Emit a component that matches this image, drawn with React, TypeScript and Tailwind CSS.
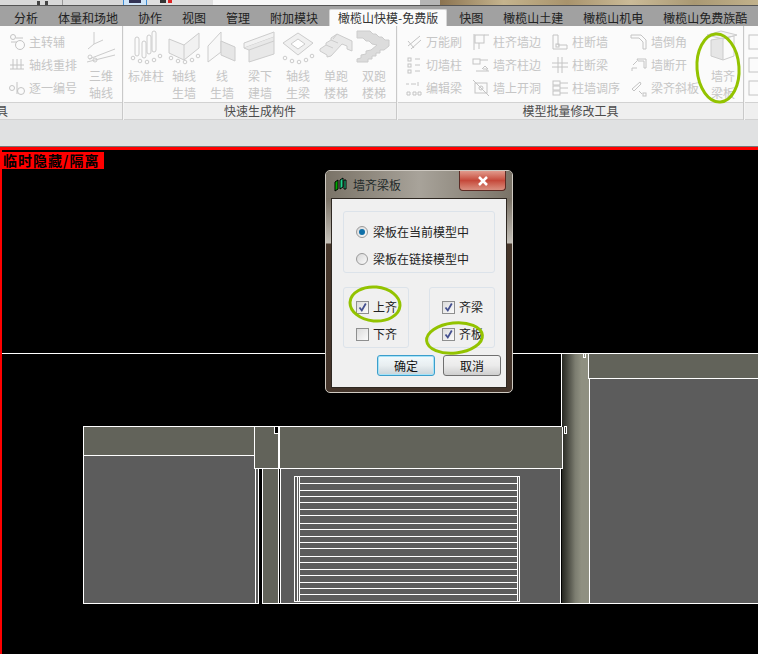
import React from 'react';

const cjk = { fontFamily: '"Noto Sans CJK SC", "Noto Sans", sans-serif' };

const tabs = ['分析', '体量和场地', '协作', '视图', '管理', '附加模块', '橄榄山快模-免费版', '快图', '橄榄山土建', '橄榄山机电', '橄榄山免费族酷'];

function Ic({ children }: { children: React.ReactNode }) {
    return (
        <svg width="18" height="18" viewBox="0 0 18 18" fill="none" stroke="#c4c4c4" strokeWidth="1" className="shrink-0">
            {children}
        </svg>
    );
}

function Big({ children }: { children: React.ReactNode }) {
    return (
        <svg width="36" height="36" viewBox="0 0 36 36" fill="none" stroke="#cccccc" strokeWidth="1" className="shrink-0">
            {children}
        </svg>
    );
}

function SmallTool({ icon, label }: { icon: React.ReactNode; label: string }) {
    return (
        <div className="flex h-[23px] items-center gap-[3px] whitespace-nowrap text-[12px] leading-none text-[#c6c6c6]">
            {icon}
            <span>{label}</span>
        </div>
    );
}

function BigTool({ icon, lines, w = 'w-[38px]' }: { icon: React.ReactNode; lines: string[]; w?: string }) {
    return (
        <div className={`flex ${w} flex-col items-center text-[12px] leading-[17px] text-[#c6c6c6]`}>
            <div className="flex h-[41px] items-center justify-center">{icon}</div>
            {lines.map((l) => (
                <span key={l} className="whitespace-nowrap">{l}</span>
            ))}
        </div>
    );
}

const dots = (
    <>
        <circle cx="5" cy="29" r="1.8" />
        <circle cx="12" cy="32" r="1.8" />
        <circle cx="19" cy="33" r="1.8" />
        <circle cx="26" cy="31" r="1.8" />
        <circle cx="32" cy="27" r="1.8" />
    </>
);

function Panel({ label, className, labelClass = 'justify-center', children }: { label: string; className: string; labelClass?: string; children: React.ReactNode }) {
    return (
        <div className={`flex h-[94px] shrink-0 flex-col border-r border-[#c9c9c9] ${className}`}>
            <div className="flex h-[76px] min-h-0 bg-[#fbfbfb]">{children}</div>
            <div className={`flex h-[18px] items-center overflow-hidden border-y border-[#d2d2d2] bg-[#efefef] text-[12px] leading-none text-[#4c4c4c] ${labelClass}`}>
                {label}
            </div>
        </div>
    );
}

function Ribbon() {
    return (
        <div className="flex h-[94px] gap-[1px] bg-[#f4f4f4]">
            <Panel label="具" labelClass="justify-start -ml-[4px]" className="w-[123px]">
                <div className="flex w-[83px] flex-col pt-[4px] pl-[8px]">
                    <SmallTool label="主转辅" icon={<Ic><circle cx="5" cy="4" r="2.5" /><circle cx="12" cy="12" r="4.5" /><path d="M8 5h7M3 9h6" /></Ic>} />
                    <SmallTool label="轴线重排" icon={<Ic><path d="M2 9h14M2 13h14M5 3v10M9 3v10M13 3v10" /></Ic>} />
                    <SmallTool label="逐一编号" icon={<Ic><circle cx="4" cy="9" r="2.5" /><circle cx="13" cy="12" r="3.5" /><path d="M9 3v12" /></Ic>} />
                </div>
                <BigTool
                    w="w-[36px]"
                    lines={['三维', '轴线']}
                    icon={<Big><path d="M11 3v12l9-4M11 15l-6 5" /><path d="M6 30l26-10M4 33l28-7" /><circle cx="7" cy="28" r="2" /><circle cx="12" cy="31" r="2" /></Big>}
                />
            </Panel>
            <Panel label="快速生成构件" className="w-[273px]">
                <div className="flex pl-[3px]">
                    <BigTool lines={['标准柱']} icon={<Big><rect x="7" y="8" width="4" height="19" rx="2" /><rect x="14" y="12" width="4" height="17" rx="2" /><rect x="19" y="6" width="4" height="19" rx="2" /><rect x="24" y="2" width="4" height="21" rx="2" />{dots}</Big>} />
                    <BigTool lines={['轴线', '生墙']} icon={<Big><path d="M3 10l15 6 15-12v15L18 31 3 24z" fill="#f1f1f1" /><path d="M18 16v15" />{dots}</Big>} />
                    <BigTool lines={['线', '生墙']} icon={<Big><path d="M4 17L17 3v20L4 33z" fill="#f8f8f8" /><path d="M17 12l14 6v14l-14-6z" fill="#e6e6e6" /></Big>} />
                    <BigTool lines={['梁下', '建墙']} icon={<Big><path d="M2 14L32 3v5L2 19z" fill="#f2f2f2" /><path d="M2 19l5 2 25-9V8M7 21v12l25-8V12" fill="#e8e8e8" /></Big>} />
                    <BigTool lines={['轴线', '生梁']} icon={<Big><path d="M18 4l15 10-15 12L3 14z" fill="#f0f0f0" /><path d="M18 10l7 5-7 5-7-5z" fill="#fff" />{dots}</Big>} />
                    <BigTool lines={['单跑', '楼梯']} icon={<Big><path d="M2 20l6-4v-2l5-3V9l6-4 15 7v10l-5-2v-3l-5-2-11 12-4 1v-2l-7-4z" fill="#e8e8e8" /><path d="M8 16l7 3M13 11l7 3M19 5l-4 5" /></Big>} />
                    <BigTool lines={['双跑', '楼梯']} icon={<Big><path d="M1 2h13l3 3h3l3 3h3l3 3h4v6l-5 4h-4v3h-4v3h-4v3h-4v3H1v-3l4-1v-3l5-1v-3l5-1 6-5-5-1-3-3h-3l-3-3H1z" fill="#dcdcdc" /></Big>} />
                </div>
            </Panel>
            <Panel label="模型批量修改工具" className="w-[346px]">
                <div className="flex pl-[7px] pt-[4px]">
                    <div className="flex w-[67px] flex-col">
                        <SmallTool label="万能刷" icon={<Ic><path d="M3 13L15 3M6 16L16 7M3 8l6 7" /></Ic>} />
                        <SmallTool label="切墙柱" icon={<Ic><rect x="3" y="2" width="3" height="3" /><rect x="3" y="8" width="3" height="3" /><rect x="3" y="14" width="3" height="3" /><path d="M10 3h5M10 9h5M10 15h5" /></Ic>} />
                        <SmallTool label="编辑梁" icon={<Ic><path d="M1 5h3M6 5h5M13 3v4M2 13h3v3H2zM8 13h3v3H8zM13 13h3v3h-3z" /></Ic>} />
                    </div>
                    <div className="flex w-[79px] flex-col">
                        <SmallTool label="柱齐墙边" icon={<Ic><rect x="3" y="2" width="9" height="8" /><path d="M2 1v16M12 2h5M7 10v6" /></Ic>} />
                        <SmallTool label="墙齐柱边" icon={<Ic><rect x="1" y="3" width="7" height="5" /><path d="M8 4h8M4 15h13M10 13l3-3 3 3M11 13h4v2" /></Ic>} />
                        <SmallTool label="墙上开洞" icon={<Ic><rect x="3" y="4" width="12" height="10" /><path d="M1 1l16 16" /><circle cx="9" cy="9" r="2" /></Ic>} />
                    </div>
                    <div className="flex w-[79px] flex-col">
                        <SmallTool label="柱断墙" icon={<Ic><path d="M2 2v14h14v-4H7V2z" /><rect x="5" y="11" width="3" height="3" /></Ic>} />
                        <SmallTool label="柱断梁" icon={<Ic><path d="M1 7h16M1 11h16M7 1v16M11 1v16" /></Ic>} />
                        <SmallTool label="柱墙调序" icon={<Ic><rect x="2" y="2" width="7" height="4" /><rect x="2" y="7" width="7" height="4" /><rect x="2" y="12" width="7" height="4" /><path d="M9 4h8M9 9h8M9 14h8" /></Ic>} />
                    </div>
                    <div className="flex w-[74px] flex-col">
                        <SmallTool label="墙倒角" icon={<Ic><path d="M1 2h10l5 5v9h-3V9L9 5H1z" /></Ic>} />
                        <SmallTool label="墙断开" icon={<Ic><path d="M7 3h9v9h-2V5H8zM2 15v-3h5M3 9l4-4M3 17" /></Ic>} />
                        <SmallTool label="梁齐斜板" icon={<Ic><path d="M2 10l8-7 1 2-7 7zM9 12l3 3" /><rect x="13" y="14" width="3" height="3" /></Ic>} />
                    </div>
                    <div className="-mt-[4px]">
                        <BigTool
                            lines={['墙齐', '梁板']}
                            icon={<Big><path d="M2 6L16 2l16 4-14 4z" fill="#f4f4f4" /><path d="M6 11l12-2v22L6 27z" fill="#e6e6e6" /><path d="M18 9l11-2v20l-11 4" /></Big>}
                        />
                    </div>
                </div>
            </Panel>
            <Panel label="" className="w-[13px] border-r-0">
                <div className="flex flex-col gap-[5px] pt-[7px] pl-[3px]">
                    <Ic><rect x="1" y="2" width="14" height="14" /></Ic>
                    <Ic><rect x="1" y="2" width="14" height="14" /></Ic>
                    <Ic><rect x="1" y="2" width="14" height="14" /></Ic>
                </div>
            </Panel>
        </div>
    );
}

function CadDrawing() {
    const stripes = [483, 490, 496, 502, 509, 515, 523, 529, 536, 542, 548, 556, 562, 569, 575, 582, 588, 594];
    return (
        <svg width="756" height="504" viewBox="2 150 756 504" className="block" shapeRendering="crispEdges">
            <defs>
                <linearGradient id="col" x1="0" x2="1" y1="0" y2="0">
                    <stop offset="0" stopColor="#23241e" />
                    <stop offset="0.2" stopColor="#45463e" />
                    <stop offset="0.5" stopColor="#7c7d70" />
                    <stop offset="0.72" stopColor="#8f9081" />
                    <stop offset="1" stopColor="#8f9081" />
                </linearGradient>
            </defs>
            <rect x="2" y="150" width="756" height="504" fill="#000" />
            <g stroke="#fff" strokeWidth="1">
                <path d="M2 353.5H758" fill="none" />
                <rect x="83.5" y="455.5" width="172" height="148" fill="#5c5c5c" />
                <rect x="83.5" y="426.5" width="171" height="29" fill="#62635a" />
                <path d="M255.5 468.5h2.500v135h-2.500" fill="#5c5c5c" />
                <rect x="254.500" y="426.5" width="24" height="42" fill="#62635a" />
                <rect x="262.500" y="468.5" width="16" height="135" fill="#62635a" />
                <rect x="274.500" y="426.5" width="4" height="7" fill="#000" />
                <rect x="280.500" y="468.5" width="280" height="135" fill="#5c5c5c" />
                <rect x="279.500" y="426.5" width="283" height="42" fill="#62635a" />
                <rect x="294.500" y="476.5" width="225" height="125" fill="#5c5c5c" />
                <path d="M297 476.500v125M299 476.500v125M517.500 476.500v125" fill="none" />
                {stripes.map((y) => (
                    <path key={y} d={`M299 ${y}.5H517.500`} fill="none" />
                ))}
                <rect x="561.500" y="353.500" width="27.500" height="250" fill="url(#col)" stroke="none" />
                <path d="M561.500 353.500V426M589.500 378v225.500M560.500 468v135.500M562.500 426.500v42" fill="none" />
                <rect x="589.500" y="378.500" width="170" height="225" fill="#5c5c5c" />
                <rect x="588.500" y="353.500" width="171" height="25" fill="#62635a" />
                <rect x="583.500" y="353.500" width="2" height="4" fill="none" />
                <rect x="564.500" y="426.500" width="2" height="7" fill="none" />
                <path d="M83 603.500H258M262 603.500H758" fill="none" />
            </g>
        </svg>
    );
}

function Check({ checked }: { checked: boolean }) {
    return (
        <span className="flex h-[13px] w-[13px] items-center justify-center border border-[#8e8f8f] bg-gradient-to-br from-[#dcdcdc] to-[#fbfbfb]">
            {checked && (
                <svg width="11" height="11" viewBox="0 0 11 11" fill="none" stroke="#44508f" strokeWidth="1.800">
                    <path d="M2.500 5.500l2.300 3L8.800 1.500" />
                </svg>
            )}
        </span>
    );
}

function Opt({ checked, label }: { checked: boolean; label: string }) {
    return (
        <div className="flex items-center gap-[4px] text-[12px] leading-none text-[#222]">
            <Check checked={checked} />
            <span>{label}</span>
        </div>
    );
}

function Radio({ on, label }: { on: boolean; label: string }) {
    return (
        <div className="flex items-center gap-[5px] text-[12px] leading-none text-[#222]">
            <span className="flex h-[12px] w-[12px] items-center justify-center rounded-full border border-[#9a9a9a] bg-gradient-to-br from-[#d8d8d8] to-[#fafafa]">
                {on && <span className="h-[6px] w-[6px] rounded-full bg-[#0f6fa8]" />}
            </span>
            <span>{label}</span>
        </div>
    );
}

function Dialog() {
    return (
        <div
            className="absolute top-[170px] left-[325px] flex h-[223px] w-[188px] flex-col rounded-[5px] border border-[#cfcac2] bg-[linear-gradient(to_bottom,#6d6459_0px,#7a7266_28px,#c4c0b8_72px,#46362a_73px,#43342a_100%)] px-[5px] pb-[4px]"
            style={cjk}
        >
            <div className="-mx-[5px] flex h-[27px] shrink-0 rounded-t-[4px] bg-gradient-to-r from-[#7a7367] via-[#a8a39a] to-[#7a7367] px-[5px]">
                <div className="flex items-center gap-[6px] pl-[3px] text-[12px] leading-none text-[#1f2a2a]">
                    <svg width="13" height="15" viewBox="0 0 13 15">
                        <path d="M1 14V5l3-2v9z" fill="#0a0" stroke="#000" strokeWidth="1" />
                        <path d="M6 12V3l3-2v9zM10 12V3h2v9z" fill="#1fd28a" stroke="#000" strokeWidth="1" />
                    </svg>
                    <span>墙齐梁板</span>
                </div>
                <div className="mr-[1px] ml-auto flex h-[20px] w-[47px] items-center justify-center rounded-b-[4px] border border-t-0 border-[#5c2b24] bg-gradient-to-b from-[#e09a8c] via-[#c5483a] to-[#d98f80] text-white">
                    <svg width="14" height="10" viewBox="0 0 14 10" fill="none" stroke="#fff" strokeWidth="2.500">
                        <path d="M3 1l8 8M11 1L3 9" />
                    </svg>
                </div>
            </div>
            <div className="flex min-h-0 flex-1 flex-col border border-[#2e2822] bg-[#f0f0f0] px-[11px] pt-[12px]">
                <div className="flex h-[62px] flex-col justify-center gap-[15px] rounded-[3px] border border-[#dce3ea] pt-[7px] pl-[12px]">
                    <Radio on label="梁板在当前模型中" />
                    <Radio on={false} label="梁板在链接模型中" />
                </div>
                <div className="mt-[14px] flex justify-between">
                    <div className="flex h-[61px] w-[66px] flex-col justify-center gap-[14px] rounded-[3px] border border-[#dce3ea] pt-[6px] pl-[12px]">
                        <Opt checked label="上齐" />
                        <Opt checked={false} label="下齐" />
                    </div>
                    <div className="flex h-[61px] w-[66px] flex-col justify-center gap-[14px] rounded-[3px] border border-[#dce3ea] pt-[6px] pl-[12px]">
                        <Opt checked label="齐梁" />
                        <Opt checked label="齐板" />
                    </div>
                </div>
                <div className="mt-[7px] -mr-[6px] flex justify-end gap-[8px]">
                    <button className="h-[21px] w-[58px] rounded-[3px] border border-[#3c9ecb] bg-gradient-to-b from-[#f2fafd] via-[#e8eef0] to-[#c9d3d8] text-[12px] leading-none text-[#111] shadow-[inset_0_0_0_1px_#a6e3f8]">确定</button>
                    <button className="h-[21px] w-[58px] rounded-[3px] border border-[#707070] bg-gradient-to-b from-[#f4f4f4] via-[#ebebeb] to-[#cfcfcf] text-[12px] leading-none text-[#111]">取消</button>
                </div>
            </div>
        </div>
    );
}

function Ellipse({ cls, w, h, rx, ry, rot }: { cls: string; w: number; h: number; rx: number; ry: number; rot: number }) {
    return (
        <svg width={w} height={h} viewBox={`0 0 ${w} ${h}`} className={`absolute ${cls}`} fill="none">
            <ellipse cx={w / 2} cy={h / 2} rx={rx} ry={ry} stroke="#93c300" strokeWidth="3" transform={`rotate(${rot} ${w / 2} ${h / 2})`} />
        </svg>
    );
}

export default function App() {
    return (
        <div className="relative h-[654px] w-[758px] overflow-hidden bg-black" style={cjk}>
            {/* window title strip */}
            <div className="flex h-[5px] bg-[#e9e9e9]">
                <div className="flex w-[123px] items-center gap-[5px] bg-[#d9d9d9] pl-[37px]">
                    <span className="h-[4px] w-[3px] bg-[#444]" />
                    <span className="h-[4px] w-[3px] bg-[#444]" />
                    <span className="ml-[9px] h-[5px] w-[1px] bg-[#999]" />
                </div>
                <div className="flex w-[24px] items-start justify-center border-x border-[#3f8fd8] bg-[#cfe4f7]">
                    <span className="h-[3px] w-[12px] bg-[#335]" />
                </div>
                <div className="flex w-[66px] items-start gap-[2px] bg-[#dfdfdf] pl-[13px]">
                    <span className="h-[3px] w-[6px] bg-[#333]" />
                    <span className="h-[3px] w-[4px] bg-[#d22]" />
                </div>
                <div className="w-[207px] bg-[#f7f7f7]" />
                <div className="w-[20px] bg-[#b5b5b5]" />
                <div className="flex-1 bg-[linear-gradient(to_right,#8b7350,#c5b48e_20%,#a8936c_40%,#cbbb98_60%,#a99873_80%,#c2b28c)]" />
            </div>
            {/* tabs */}
            <div className="flex h-[21px] items-end border-t border-[#555] bg-[#a1a1a1] pl-[4px]">
                {tabs.map((t, i) =>
                    i === 6 ? (
                        <div key={t} className="mr-[2px] ml-[1px] flex h-[17px] items-center rounded-t-[2px] border border-b-0 border-[#d5d5d5] bg-[#fbfbfb] px-[8px] text-[12px] leading-none whitespace-nowrap text-[#333]">
                            {t}
                        </div>
                    ) : (
                        <div key={t} className="flex h-[17px] items-center px-[10px] text-[12px] leading-none whitespace-nowrap text-[#222]">
                            {t}
                        </div>
                    ),
                )}
            </div>
            <Ribbon />
            <div className="h-[26px] bg-[#e0e1e2]" />
            <div className="h-[1px] bg-[#777]" />
            <div className="h-[3px] bg-[#ff0000]" />
            <div className="flex h-[504px] border-l-2 border-[#ff0000]">
                <CadDrawing />
            </div>
            <div className="absolute top-[152px] left-[2px] flex h-[17px] w-[102px] items-center bg-[#ff0000] pb-[1px] pl-[1px] text-[14px] leading-none font-bold tracking-[1px] whitespace-nowrap text-black">
                临时隐藏/隔离
            </div>
            <Dialog />
            <Ellipse cls="top-[31px] left-[693px]" w={50} h={74} rx={21} ry={34} rot={-4} />
            <Ellipse cls="top-[284px] left-[348px]" w={54} h={40} rx={25} ry={17} rot={5} />
            <Ellipse cls="top-[320px] left-[424px]" w={61} h={36} rx={28} ry={15} rot={-6} />
        </div>
    );
}
